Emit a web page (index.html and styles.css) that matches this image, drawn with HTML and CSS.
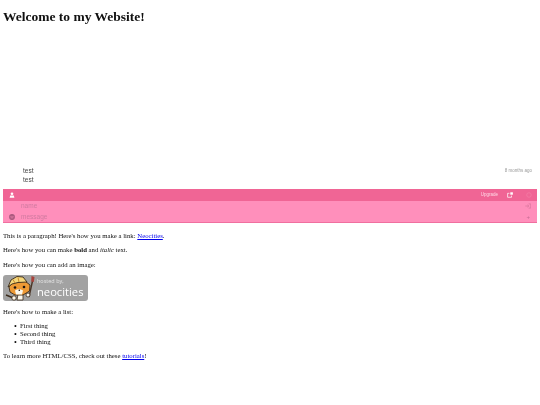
FILE: index.html
```html
<!DOCTYPE html>
<html lang="en">
<head>
    <meta charset="UTF-8">
    <title>My Website</title>
    <link rel="stylesheet" href="styles.css">
</head>
<body>
    <h1>Welcome to my Website!</h1>

    <!-- Chat widget -->
    <div class="chat">
        <div class="messages">
            <div class="message">
                <div class="message-text">
                    <div>test</div>
                    <div>test</div>
                </div>
                <span class="message-time">8 months ago</span>
            </div>
        </div>
        <div class="chat-bar">
            <svg class="bar-icon" viewBox="0 0 10 10"><circle cx="5" cy="3" r="2.2" fill="#fff"/><path d="M1 9.5 L2 6 L8 6 L9 9.5 Z" fill="#fff"/></svg>
            <span class="upgrade">Upgrade</span>
            <svg class="share-icon" viewBox="0 0 10 10"><path d="M7.5 6 V8.8 H1 V2.2 H4" fill="none" stroke="#fff" stroke-width="1.2"/><path d="M5.5 0.5 H9.8 V4.5 H5.5 Z" fill="#fff"/></svg>
            <svg class="gear-icon" viewBox="0 0 10 10"><circle cx="5" cy="5" r="3.8" fill="none" stroke="#f47ea6" stroke-width="1.2"/></svg>
        </div>
        <div class="chat-form">
            <div class="form-row">
                <span class="form-icon"></span>
                <span class="placeholder">name</span>
                <svg class="login-icon" viewBox="0 0 10 10"><path d="M0.5 5 H6 M4 3 L6.5 5 L4 7" fill="none" stroke="#d8769c" stroke-width="1.2"/><path d="M6 1.5 H9.5 V8.5 H6" fill="none" stroke="#d8769c" stroke-width="1.2"/></svg>
            </div>
            <div class="form-row">
                <svg class="form-icon" viewBox="0 0 10 10"><circle cx="5" cy="5" r="4.8" fill="#a8577c"/><circle cx="3.4" cy="3.8" r="0.9" fill="#ff8fbb"/><circle cx="6.6" cy="3.8" r="0.9" fill="#ff8fbb"/><path d="M2.6 6.4 H7.4" stroke="#ff8fbb" stroke-width="1.1"/></svg>
                <span class="placeholder">message</span>
                <span class="plus">+</span>
            </div>
        </div>
    </div>

    <p class="first">This is a paragraph! Here's how you make a link: <a href="#">Neocities</a>.</p>
    <p>Here's how you can make <strong>bold</strong> and <em>italic</em> text.</p>
    <p>Here's how you can add an image:</p>

    <!-- Hosted by Neocities badge -->
    <div class="badge">
        <svg class="badge-cat" viewBox="0 0 33 26">
            <!-- brush -->
            <path d="M26 22 L29.5 6" stroke="#4a3526" stroke-width="1.4"/>
            <path d="M28.5 1 L31.5 2 L30.8 7 L28.2 6.5 Z" fill="#a8423c"/>
            <!-- stick and legs -->
            <path d="M3 20 L13 24" stroke="#3a2a1a" stroke-width="1.4"/>
            <path d="M15 19 L14 25 L20 25 L20 19 Z" fill="#fdf8ec" stroke="#3a2a1a" stroke-width="0.8"/>
            <circle cx="11" cy="23" r="2.2" fill="#fdf8ec" stroke="#3a2a1a" stroke-width="0.8"/>
            <circle cx="25" cy="20" r="2" fill="#fdf8ec" stroke="#3a2a1a" stroke-width="0.8"/>
            <!-- head -->
            <path d="M6 12 L9 8 L22 6 L27 10 L26.5 16 L20 20 L12 20 L7 17 Z" fill="#ee9a35" stroke="#3a2a1a" stroke-width="0.9"/>
            <!-- helmet -->
            <path d="M5 12 L8 5 L14 1.5 L20 2 L24 7 L15 7.5 L9 9 Z" fill="#f5d77c" stroke="#3a2a1a" stroke-width="0.9"/>
            <path d="M10 4.5 L12 8 M15 2.5 L16 7" stroke="#c98b2c" stroke-width="1"/>
            <!-- face -->
            <path d="M12 15.5 Q16 13 20 15.5 L19 19.5 L13 19.5 Z" fill="#fdf8ec"/>
            <circle cx="12" cy="12.5" r="1.3" fill="#1c1410"/>
            <circle cx="21" cy="12" r="1.3" fill="#1c1410"/>
            <circle cx="16.3" cy="15.3" r="0.8" fill="#1c1410"/>
        </svg>
        <div class="badge-text">
            <span class="hosted">hosted by,</span>
            <span class="neocities">neocities</span>
        </div>
    </div>

    <p>Here's how to make a list:</p>
    <ul>
        <li>First thing</li>
        <li>Second thing</li>
        <li>Third thing</li>
    </ul>
    <p class="last">To learn more HTML/CSS, check out these <a href="#">tutorials</a>!</p>
</body>
</html>
```

FILE: styles.css
```css
/* General Page Styles */
body {
    margin: 3px;
    background-color: white;
    color: #111;
    font-family: "Liberation Serif", serif;
    font-size: 6.75px;
    line-height: 8px;
    filter: blur(0.3px);
}

h1 {
    margin: 6px 0 0;
    font-size: 13.5px;
    line-height: 16px;
}

p {
    margin: 6.5px 0;
}

p.first {
    margin-top: 8.5px;
}

p.last {
    margin-top: 5.5px;
}

a {
    color: #0000ee;
}

ul {
    margin: 6.5px 0 0;
    padding-left: 17px;
    list-style: none;
}

li::before {
    content: "\2022";
    display: inline-block;
    width: 6px;
    margin-left: -6px;
    font-size: 8px;
    line-height: 6px;
    vertical-align: -1px;
}

/* Chat widget */
.chat {
    margin-top: 141px;
    font-family: "Liberation Sans", sans-serif;
}

.messages {
    padding-bottom: 5px;
}

.message {
    display: flex;
    justify-content: space-between;
    padding: 0 5px 0 20px;
    font-size: 6.5px;
    line-height: 9px;
    color: #444;
}

.message-time {
    font-size: 4.5px;
    color: #999;
}

.chat-bar {
    display: flex;
    align-items: center;
    height: 12px;
    padding: 0 5px 0 6px;
    background-color: #f06595;
}

.bar-icon {
    width: 6px;
    height: 6px;
}

.upgrade {
    margin-left: auto;
    font-size: 4.5px;
    color: #ffd9e6;
}

.share-icon {
    width: 6px;
    height: 6px;
    margin: 0 13px 0 9px;
}

.gear-icon {
    width: 6px;
    height: 6px;
}

.chat-form {
    height: 21px;
    padding: 0 6px;
    background-color: #ff8fbb;
    border-bottom: 1px solid #f06f9f;
}

.form-row {
    display: flex;
    align-items: center;
    height: 10.5px;
}

.form-icon {
    width: 6px;
    height: 6px;
    margin-right: 6px;
}

.placeholder {
    font-size: 6.5px;
    color: #d07aa0;
}

.login-icon {
    width: 6px;
    height: 6px;
    margin-left: auto;
}

.plus {
    margin-left: auto;
    margin-right: 1px;
    font-size: 6px;
    color: #c66a93;
}

/* Hosted by Neocities badge */
.badge {
    display: flex;
    align-items: center;
    width: 85px;
    height: 26px;
    background-color: #a2a2a2;
    border-radius: 3px;
    color: white;
    font-family: "Open Sans", sans-serif;
}

.badge-cat {
    width: 33px;
    height: 26px;
    flex-shrink: 0;
}

.badge-text {
    display: flex;
    flex-direction: column;
    padding-left: 1px;
}

.hosted {
    font-size: 5.5px;
    line-height: 7px;
    color: #e4e4e4;
}

.neocities {
    font-size: 11.2px;
    line-height: 14px;
}
```
